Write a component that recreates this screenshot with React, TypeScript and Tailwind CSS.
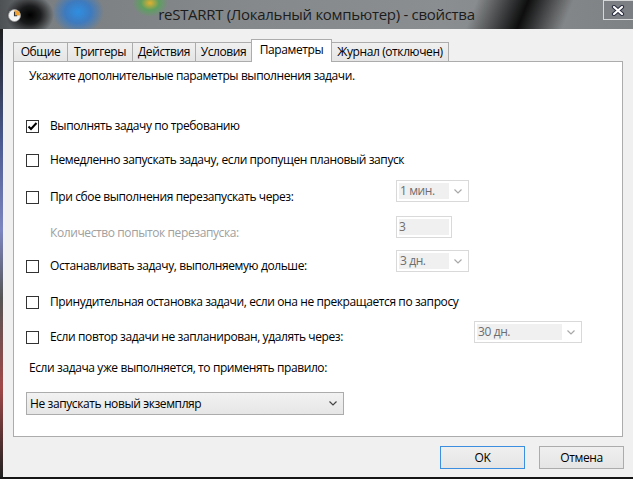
import React from "react";

function Chevron({ color }: { color: string }) {
  return (
    <svg width="8" height="5" viewBox="0 0 8 5" fill="none">
      <path d="M0.5 0.5 L4 4 L7.5 0.5" stroke={color} strokeWidth="1.2" />
    </svg>
  );
}

function Checkbox({ checked }: { checked?: boolean }) {
  return (
    <div className="w-[13px] h-[13px] border border-[#333] bg-white flex items-center justify-center shrink-0">
      {checked && (
        <svg width="11" height="11" viewBox="0 0 11 11" fill="none">
          <path d="M1.5 5.5 L4 8 L9.5 2" stroke="#000" strokeWidth="2" />
        </svg>
      )}
    </div>
  );
}

function CheckRow({ label, checked }: { label: string; checked?: boolean }) {
  return (
    <div className="flex items-center h-[16px]">
      <Checkbox checked={checked} />
      <span className="ml-[11px] whitespace-nowrap">{label}</span>
    </div>
  );
}

function DisabledCombo({ value, w, inner }: { value: string; w: string; inner: string }) {
  return (
    <div className={`${w} h-[22px] border border-[#d9d9d9] bg-white p-[2px] flex items-stretch shrink-0`}>
      <div className={`${inner} bg-[#f0f0f0] text-[#6d6d6d] pl-px flex items-center whitespace-nowrap`}>{value}</div>
      <div className="flex-1 flex items-center justify-center">
        <Chevron color="#a8a8a8" />
      </div>
    </div>
  );
}

export default function App() {
  return (
    <div className="w-[633px] h-[479px] flex flex-col overflow-hidden bg-[#111] font-['Open_Sans',sans-serif] text-[12px] leading-[16px] tracking-[-0.4px] text-black">
      {/* title bar */}
      <div className="h-[29px] shrink-0 flex bg-[radial-gradient(ellipse_24px_20px_at_30px_15px,#000_0%,rgba(0,0,0,0.75)_45%,transparent_100%),radial-gradient(ellipse_26px_22px_at_78px_12px,#2f8fe0_0%,rgba(40,120,210,0.75)_50%,transparent_100%),radial-gradient(ellipse_18px_14px_at_150px_3px,#e0b030_0%,rgba(80,170,80,0.7)_50%,transparent_100%),linear-gradient(112deg,transparent_74%,rgba(0,0,0,0.9)_82%,transparent_89%),linear-gradient(to_right,#4e5154,#7b7f82_8%,#85898c_40%,#8b8e90_70%,#7f8284_100%)]">
        <div className="w-[30px] flex items-start pt-[9px] pl-[8px]">
          <svg width="13" height="13" viewBox="0 0 13 13">
            <circle cx="6.5" cy="6.5" r="6" fill="#f4f4f4" stroke="#9a9a9a" strokeWidth="0.8" />
            <path d="M6.5 6.5 L6.5 0.9 A5.6 5.6 0 0 1 12.1 6.5 Z" fill="#f0a030" />
            <path d="M6.5 2.8 L6.5 6.7 L9.2 6.7" stroke="#333" strokeWidth="1.1" fill="none" />
          </svg>
        </div>
        <div className="flex-1 flex items-center justify-center text-[15px] leading-[20px] tracking-[-0.3px] text-[#1c1c1c] pb-[2px] whitespace-nowrap">
          reSTARRT (Локальный компьютер) - свойства
        </div>
        <div className="w-[30px] h-[20px] border border-[#d4d6d8] border-r-0 bg-[rgba(120,124,128,0.6)] flex items-center justify-center pr-[2px]">
          <svg width="14" height="11" viewBox="0 0 14 11">
            <path d="M3 2 L11 9 M11 2 L3 9" stroke="#2a2d40" strokeWidth="4.2" strokeLinecap="round" />
            <path d="M3 2 L11 9 M11 2 L3 9" stroke="#fff" strokeWidth="2.2" strokeLinecap="round" />
          </svg>
        </div>
      </div>

      <div className="flex flex-1">
        <div className="w-[3px] bg-[linear-gradient(to_bottom,#1e1e1e,#4a5a90_25%,#7d86c0_45%,#555_60%,#a04848_80%,#222)]" />
        <div className="flex-1 bg-[#f0f0f0] pl-[10px] flex flex-col">
          {/* tabs */}
          <div className="pt-[10px] flex items-end h-[32px]">
            <div className="w-[55px] h-[19px] border border-b-0 border-[#acacac] bg-[linear-gradient(#f0f0f0,#e5e5e5)] flex items-center justify-center">Общие</div>
            <div className="-ml-px w-[66px] h-[19px] border border-b-0 border-[#acacac] bg-[linear-gradient(#f0f0f0,#e5e5e5)] flex items-center justify-center">Триггеры</div>
            <div className="-ml-px w-[64px] h-[19px] border border-b-0 border-[#acacac] bg-[linear-gradient(#f0f0f0,#e5e5e5)] flex items-center justify-center">Действия</div>
            <div className="-ml-px w-[57px] h-[19px] border border-b-0 border-[#acacac] bg-[linear-gradient(#f0f0f0,#e5e5e5)] flex items-center justify-center">Условия</div>
            <div className="-ml-px w-[81px] h-[23px] -mb-px relative z-10 border border-b-0 border-[#acacac] bg-white flex items-center justify-center pb-[2px]">Параметры</div>
            <div className="-ml-px w-[118px] h-[19px] border border-b-0 border-[#acacac] bg-[linear-gradient(#f0f0f0,#e5e5e5)] flex items-center justify-center">Журнал (отключен)</div>
          </div>

          {/* panel */}
          <div className="w-[610px] h-[376px] border border-[#acacac] bg-white flex flex-col pl-[12px]">
            <div className="mt-[6px] ml-[3px] h-[16px] whitespace-nowrap">Укажите дополнительные параметры выполнения задачи.</div>
            <div className="mt-[34px]">
              <CheckRow label="Выполнять задачу по требованию" checked />
            </div>
            <div className="mt-[18px]">
              <CheckRow label="Немедленно запускать задачу, если пропущен плановый запуск" />
            </div>
            <div className="mt-[12px] h-[25px] flex items-start">
              <div className="w-[370px] mt-[9px]">
                <CheckRow label="При сбое выполнения перезапускать через:" />
              </div>
              <DisabledCombo value="1 мин." w="w-[73px]" inner="w-[50px]" />
            </div>
            <div className="mt-[11px] h-[25px] flex items-start">
              <div className="w-[370px] mt-[9px] pl-[24px] text-[#a0a0a0] whitespace-nowrap h-[16px]">Количество попыток перезапуска:</div>
              <div className="w-[56px] h-[22px] border border-[#d9d9d9] bg-white p-[2px] flex items-stretch">
                <div className="flex-1 bg-[#f0f0f0] text-[#6d6d6d] flex items-center">3</div>
              </div>
            </div>
            <div className="mt-[9px] h-[24px] flex items-start">
              <div className="w-[370px] mt-[8px]">
                <CheckRow label="Останавливать задачу, выполняемую дольше:" />
              </div>
              <DisabledCombo value="3 дн." w="w-[73px]" inner="w-[50px]" />
            </div>
            <div className="mt-[20px]">
              <CheckRow label="Принудительная остановка задачи, если она не прекращается по запросу" />
            </div>
            <div className="mt-[11px] h-[24px] flex items-start">
              <div className="w-[448px] mt-[8px]">
                <CheckRow label="Если повтор задачи не запланирован, удалять через:" />
              </div>
              <DisabledCombo value="30 дн." w="w-[108px]" inner="w-[85px]" />
            </div>
            <div className="mt-[15px] ml-[3px] h-[16px] whitespace-nowrap">Если задача уже выполняется, то применять правило:</div>
            <div className="mt-[16px] w-[318px] h-[23px] border border-[#acacac] bg-[linear-gradient(#f2f2f2,#e6e6e6)] flex items-center justify-between pl-[3px] pr-[6px]">
              <span className="whitespace-nowrap">Не запускать новый экземпляр</span>
              <Chevron color="#444" />
            </div>
          </div>

          {/* buttons */}
          <div className="mt-[9px] w-[611px] flex justify-end gap-[14px]">
            <div className="w-[85px] h-[23px] border border-[#3c8fe0] bg-[linear-gradient(#efefef,#e5e5e5)] flex items-center justify-center">OK</div>
            <div className="w-[85px] h-[23px] border border-[#acacac] bg-[linear-gradient(#efefef,#e5e5e5)] flex items-center justify-center">Отмена</div>
          </div>
        </div>
      </div>
      <div className="h-[2px] shrink-0 bg-[#151515]" />
    </div>
  );
}
